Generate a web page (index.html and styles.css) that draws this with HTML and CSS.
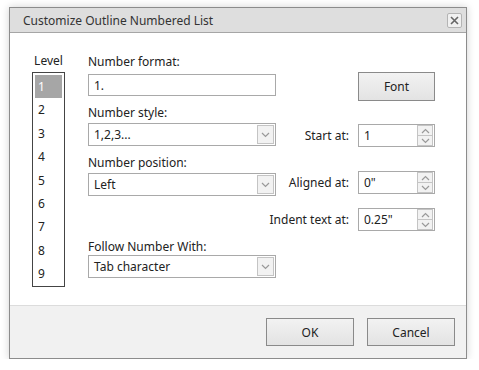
FILE: index.html
```html
<!DOCTYPE html>
<html lang="en">

<head>
    <meta charset="UTF-8">
    <meta name="viewport" content="width=device-width, initial-scale=1.0">
    <title>Customize Outline Numbered List</title>
    <link rel="stylesheet" href="styles.css">
</head>

<body>

    <div class="dialog">
        <div class="dialog-header">
            <span class="dialog-title">Customize Outline Numbered List</span>
            <button class="close-btn" type="button" aria-label="Close">
                <svg width="9" height="9" viewBox="0 0 9 9">
                    <path d="M1 1 L8 8 M8 1 L1 8" stroke="#666" stroke-width="1.6" fill="none" />
                </svg>
            </button>
        </div>

        <div class="dialog-body">
            <div class="level-col">
                <div class="level-label">Level</div>
                <ul class="level-list">
                    <li class="selected">1</li>
                    <li>2</li>
                    <li>3</li>
                    <li>4</li>
                    <li>5</li>
                    <li>6</li>
                    <li>7</li>
                    <li>8</li>
                    <li>9</li>
                </ul>
            </div>

            <div class="form-col">
                <label class="field-label first">Number format:</label>
                <div class="text-box">1.</div>

                <label class="field-label">Number style:</label>
                <div class="combo">
                    <span>1,2,3...</span>
                    <span class="combo-btn">
                        <svg width="9" height="6" viewBox="0 0 9 6"><path d="M1 1 L4.5 4.5 L8 1" stroke="#999" stroke-width="1.2" fill="none" /></svg>
                    </span>
                </div>

                <label class="field-label">Number position:</label>
                <div class="combo">
                    <span>Left</span>
                    <span class="combo-btn">
                        <svg width="9" height="6" viewBox="0 0 9 6"><path d="M1 1 L4.5 4.5 L8 1" stroke="#999" stroke-width="1.2" fill="none" /></svg>
                    </span>
                </div>

                <label class="field-label follow">Follow Number With:</label>
                <div class="combo">
                    <span>Tab character</span>
                    <span class="combo-btn">
                        <svg width="9" height="6" viewBox="0 0 9 6"><path d="M1 1 L4.5 4.5 L8 1" stroke="#999" stroke-width="1.2" fill="none" /></svg>
                    </span>
                </div>
            </div>

            <div class="side-col">
                <button class="btn font-btn" type="button">Font</button>

                <div class="spin-row start-row">
                    <label>Start at:</label>
                    <div class="spin">
                        <span>1</span>
                        <span class="spin-btns">
                            <span class="spin-up"><svg width="9" height="6" viewBox="0 0 9 6"><path d="M1 5 L4.5 1.5 L8 5" stroke="#999" stroke-width="1.2" fill="none" /></svg></span>
                            <span class="spin-down"><svg width="9" height="6" viewBox="0 0 9 6"><path d="M1 1 L4.5 4.5 L8 1" stroke="#999" stroke-width="1.2" fill="none" /></svg></span>
                        </span>
                    </div>
                </div>

                <div class="spin-row aligned-row">
                    <label>Aligned at:</label>
                    <div class="spin">
                        <span>0"</span>
                        <span class="spin-btns">
                            <span class="spin-up"><svg width="9" height="6" viewBox="0 0 9 6"><path d="M1 5 L4.5 1.5 L8 5" stroke="#999" stroke-width="1.2" fill="none" /></svg></span>
                            <span class="spin-down"><svg width="9" height="6" viewBox="0 0 9 6"><path d="M1 1 L4.5 4.5 L8 1" stroke="#999" stroke-width="1.2" fill="none" /></svg></span>
                        </span>
                    </div>
                </div>

                <div class="spin-row indent-row">
                    <label>Indent text at:</label>
                    <div class="spin">
                        <span>0.25"</span>
                        <span class="spin-btns">
                            <span class="spin-up"><svg width="9" height="6" viewBox="0 0 9 6"><path d="M1 5 L4.5 1.5 L8 5" stroke="#999" stroke-width="1.2" fill="none" /></svg></span>
                            <span class="spin-down"><svg width="9" height="6" viewBox="0 0 9 6"><path d="M1 1 L4.5 4.5 L8 1" stroke="#999" stroke-width="1.2" fill="none" /></svg></span>
                        </span>
                    </div>
                </div>
            </div>
        </div>

        <div class="dialog-footer">
            <button class="btn" type="button">OK</button>
            <button class="btn" type="button">Cancel</button>
        </div>
    </div>

</body>

</html>
```

FILE: styles.css
```css
body {
    font-family: "Noto Sans", "Open Sans", sans-serif;
    font-size: 12px;
    color: #222;
    background-color: #fff;
    margin: 0;
    padding: 7px 0 0 9px;
}

.dialog {
    width: 458px;
    height: 352px;
    box-sizing: border-box;
    border: 1px solid #8c8c8c;
    background-color: #fff;
    box-shadow: 0 0 8px rgba(0, 0, 0, 0.18);
    display: flex;
    flex-direction: column;
}

.dialog-header {
    height: 24px;
    background-color: #dedede;
    border-bottom: 1px solid #a6a6a6;
    display: flex;
    align-items: center;
    justify-content: space-between;
    padding: 0 4px 0 13px;
}

.dialog-title {
    font-size: 12px;
    color: #333;
}

.close-btn {
    width: 15px;
    height: 15px;
    padding: 0;
    border: 1px solid #b4b4b4;
    border-radius: 2px;
    background-color: #f0f0f0;
    display: flex;
    align-items: center;
    justify-content: center;
}

.dialog-body {
    flex: 1;
    display: flex;
    padding-left: 22px;
}

.level-col {
    width: 33px;
    flex-shrink: 0;
    margin-right: 23px;
}

.level-label {
    margin-top: 19px;
    height: 20px;
    text-align: center;
}

.level-list {
    list-style: none;
    margin: 0;
    padding: 2px 2px 0;
    height: 215px;
    box-sizing: border-box;
    border: 1px solid #444;
}

.level-list li {
    height: 23.4px;
    line-height: 23px;
    padding-left: 3px;
}

.level-list li.selected {
    background-color: #a6a6a6;
    color: #fff;
}

.form-col {
    width: 188px;
    flex-shrink: 0;
    display: flex;
    flex-direction: column;
}

.field-label {
    display: block;
    height: 16px;
    line-height: 16px;
    margin-top: 9px;
    margin-bottom: 2px;
}

.field-label.first {
    margin-top: 21px;
    margin-bottom: 4px;
}

.field-label.follow {
    margin-top: 43px;
    margin-bottom: 0;
}

.text-box,
.combo,
.spin {
    height: 23px;
    box-sizing: border-box;
    border: 1px solid #a9a9a9;
    background-color: #fff;
    display: flex;
    align-items: center;
    justify-content: space-between;
    padding: 0 1px 0 5px;
}

.text-box {
    height: 22px;
}

.combo-btn {
    width: 17px;
    height: 19px;
    box-sizing: border-box;
    border: 1px solid #c4c4c4;
    background-color: #f2f2f2;
    display: flex;
    align-items: center;
    justify-content: center;
}

.side-col {
    flex: 1;
    min-width: 0;
    margin-left: -20px;
    padding-right: 31px;
    display: flex;
    flex-direction: column;
    align-items: flex-end;
}

.btn {
    font-family: inherit;
    font-size: 12px;
    color: #222;
    height: 29px;
    box-sizing: border-box;
    border: 1px solid #8a8a8a;
    background: linear-gradient(#f2f2f2, #e3e3e3);
    padding: 0;
}

.font-btn {
    width: 77px;
    margin-top: 39px;
}

.spin-row {
    display: flex;
    align-items: center;
}

.spin-row label {
    margin-right: 9px;
    white-space: nowrap;
}

.start-row {
    margin-top: 23px;
}

.aligned-row {
    margin-top: 24px;
}

.indent-row {
    margin-top: 14px;
}

.spin {
    width: 77px;
}

.spin-btns {
    width: 16px;
    height: 21px;
    box-sizing: border-box;
    display: flex;
    flex-direction: column;
    border: 1px solid #c4c4c4;
    background-color: #f2f2f2;
}

.spin-up,
.spin-down {
    flex: 1;
    display: flex;
    align-items: center;
    justify-content: center;
}

.spin-up {
    border-bottom: 1px solid #c4c4c4;
}

.dialog-footer {
    height: 53px;
    box-sizing: border-box;
    background-color: #f1f1f1;
    border-top: 1px solid #dcdcdc;
    display: flex;
    justify-content: flex-end;
    align-items: center;
    gap: 13px;
    padding: 0 11px 0 0;
}

.dialog-footer .btn {
    width: 88px;
    height: 28px;
}
```
